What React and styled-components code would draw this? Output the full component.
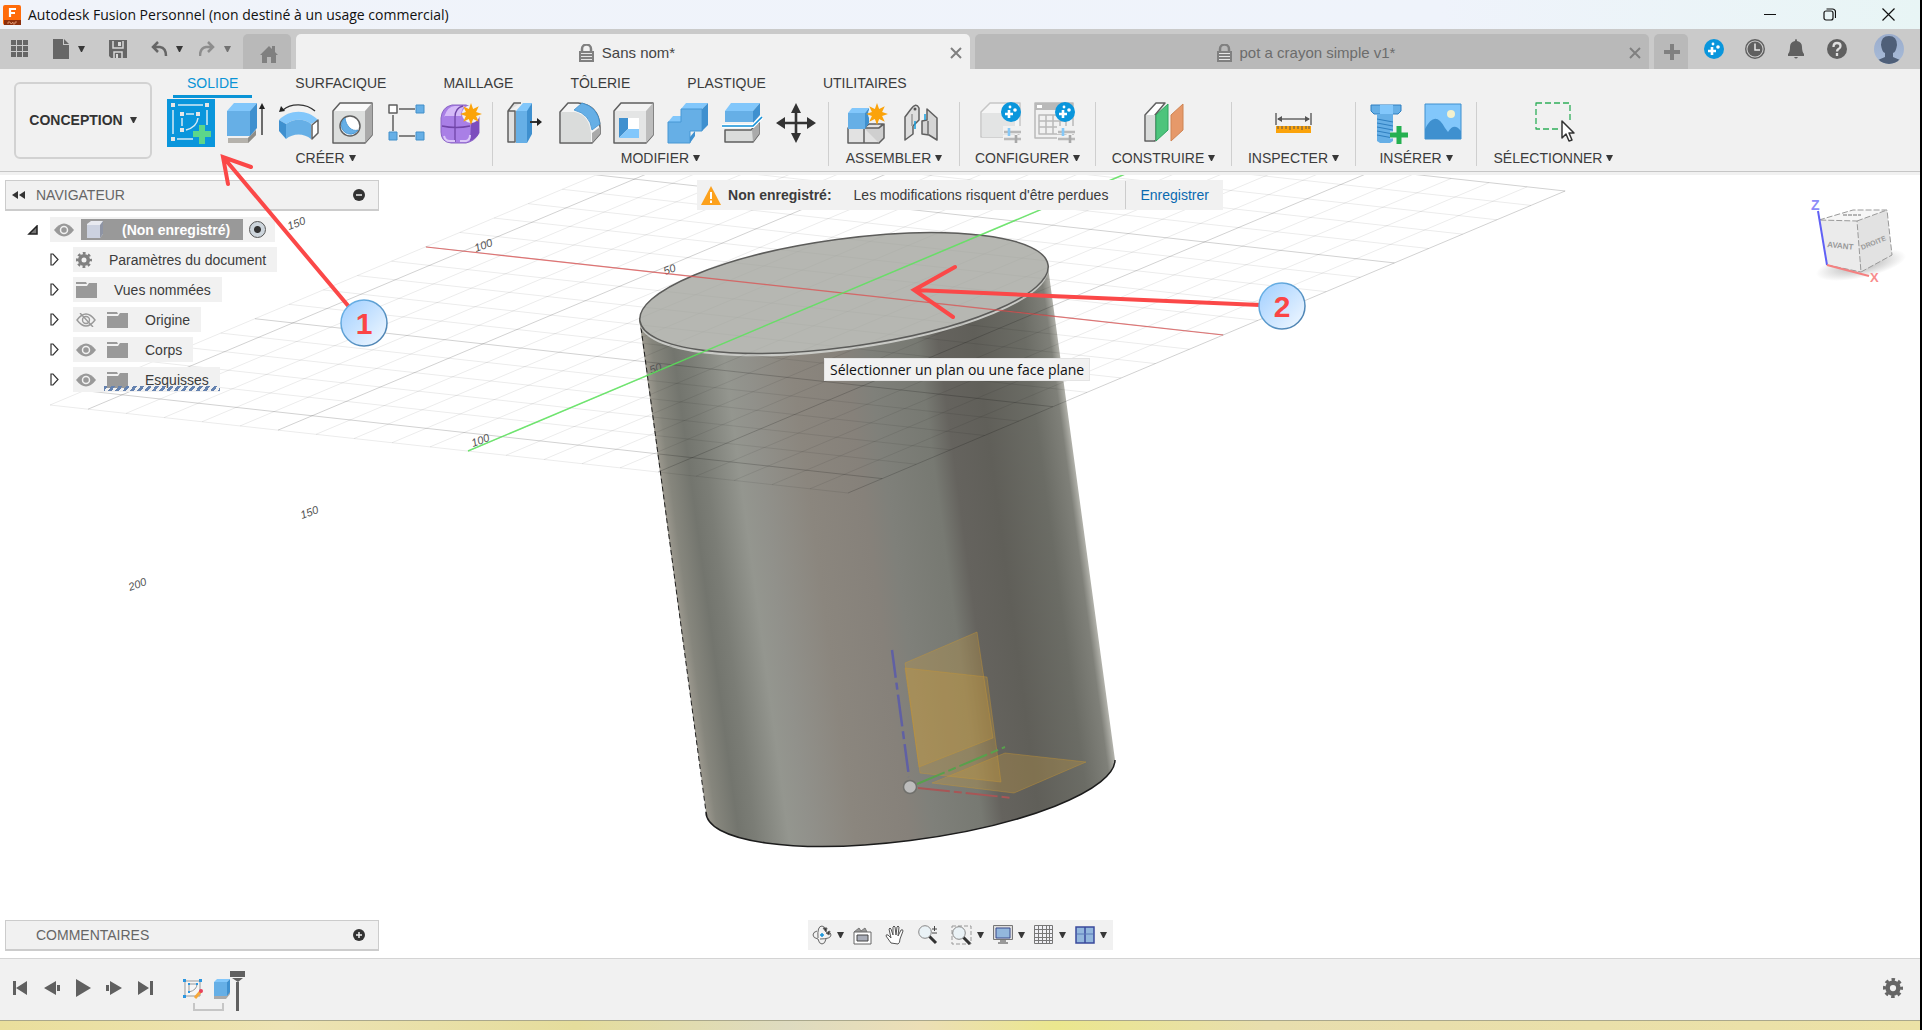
import React from 'react'
import styled, { createGlobalStyle, css } from 'styled-components'

const GlobalStyle = createGlobalStyle`
* { box-sizing: border-box; }
body {
  margin: 0;
  overflow: hidden;
  font-family: "Liberation Sans", Arial, sans-serif;
  font-size: 14px;
  color: #3c3c3c;
}
button {
  font: inherit;
  color: inherit;
  border: 0;
  padding: 0;
  background: none;
  cursor: pointer;
}
svg { display: block; flex: none; }
`;

const Window = styled.div`
position: relative;
display: flex;
flex-direction: column;
height: 100vh;
border-right: 2px solid #000;
background: #fff;
`;

const TitleBar = styled.header`
display: flex;
align-items: center;
flex: none;
height: 29px;
padding: 0 25px 0 3px;
gap: 7px;
background: linear-gradient(90deg, #f0f3fa 0%, #eff3fb 75%, #e8f5f5 100%);
font-family: "Open Sans", "Noto Sans", sans-serif;
font-size: 14px;
line-height: 20px;
color: #111;
`;

const WindowButtons = styled.div`
display: flex;
gap: 46px;
margin-left: auto;
`;

const TabBar = styled.div`
display: flex;
align-items: flex-end;
flex: none;
height: 40px;
background: #cacaca;
color: #666;
`;

const QuickTools = styled.div`
display: flex;
align-items: center;
align-self: stretch;
gap: 24px;
padding: 0 12px 0 11px;
`;

const UndoGroup = styled.div`
display: flex;
gap: 16px;
`;

const IconButton = styled.button`
display: flex;
align-items: center;
gap: 8px;
opacity: ${p => (p.$dim ? 0.6 : 1)};
`;

const tabShape = css`
height: 35px;
border-radius: 5px 5px 0 0;
background: #b9b9b9;
`;

const HomeTab = styled.button`
${tabShape}
width: 48px;
display: flex;
justify-content: center;
align-items: center;
padding: 4px 0 0 4px;
color: #808080;
`;

const DocTab = styled.div`
${tabShape}
flex: 1;
display: flex;
align-items: center;
margin-left: 5px;
padding: 2px 8px 0;
color: ${p => (p.$active ? '#444' : '#6c6c6c')};
background: ${p => (p.$active ? '#f1f1f1' : '#b9b9b9')};
`;

const DocName = styled.button`
flex: 1;
display: flex;
align-items: center;
justify-content: center;
gap: 8px;
font-size: 15px;
line-height: 20px;
`;

const NewTab = styled(HomeTab)`
width: 34px;
margin-left: 5px;
padding: 0 0 0 2px;
`;

const AccountTools = styled.div`
display: flex;
align-items: center;
align-self: stretch;
gap: 21px;
padding: 0 16px;

.avatar { margin-left: 6px; }
`;

const Ribbon = styled.div`
display: flex;
flex: none;
height: 106px;
padding: 0 14px;
gap: 12px;
background: linear-gradient(#f1f1f1 102px, #c6c6c6 102px, #c6c6c6 103px, #f1f1f1 103px);
`;

const Workspace = styled.button`
display: flex;
align-items: center;
justify-content: center;
gap: 7px;
width: 138px;
height: 77px;
margin-top: 13px;
padding-bottom: 2px;
border: 2px solid #d2d2d2;
border-radius: 6px;
font-weight: 700;
font-size: 14px;
color: #333;
`;

const RibbonBody = styled.div`
display: flex;
flex-direction: column;
`;

const RibbonTabs = styled.div`
display: flex;
gap: 29px;
height: 29px;
padding-left: 9px;
`;

const RibbonTab = styled.button`
padding: 2px 14px 0;
line-height: 24px;
color: ${p => (p.$active ? '#0a94d6' : '#3c3c3c')};
border-bottom: 3px solid ${p => (p.$active ? '#0a94d6' : 'transparent')};
`;

const Groups = styled.div`
display: flex;
`;

const Group = styled.div`
display: flex;
flex-direction: column;
align-items: center;
width: ${p => p.$width}px;
height: 69px;

&:first-child { padding-right: 5px; }
`;

const Divider = styled.div`
width: 1px;
height: 64px;
margin-top: 4px;
background: #cfcfcf;
`;

const Tools = styled.div`
display: flex;
height: 50px;
`;

const Tool = styled.button`
display: flex;
align-items: center;
justify-content: center;
width: 54px;
height: 50px;
`;

const GroupLabel = styled.button`
display: flex;
align-items: center;
gap: 4px;
line-height: 20px;
white-space: nowrap;
`;

const Viewport = styled.main`
position: relative;
flex: 1;
min-height: 0;
overflow: hidden;
`;

const Scene = styled.svg`
position: absolute;
inset: 0;
width: 100%;
height: 100%;
`;

const Overlay = styled.div`
position: relative;
display: flex;
flex-direction: column;
justify-content: space-between;
height: 100%;
padding: 5px 5px 7px;
`;

const OverlayRow = styled.div`
display: grid;
grid-template-columns: 1fr auto 1fr;
align-items: start;
`;

const Panel = styled.section`
width: 374px;
`;

const PanelHeader = styled.div`
display: flex;
align-items: center;
gap: 11px;
height: 31px;
padding: 0 13px 0 6px;
border: 1px solid #ccc;
border-bottom-width: 2px;
background: #f1f1f1;
color: #666;

.title { flex: 1; padding-left: ${p => (p.$plain ? 24 : 0)}px; }
`;

const Tree = styled.div`
display: flex;
flex-direction: column;
align-items: flex-start;
gap: 5px;
padding-top: 6px;
`;

const TreeRow = styled.div`
display: flex;
align-items: center;
gap: 12px;
height: 25px;
padding-left: ${p => (p.$root ? 21 : 39)}px;
`;

const TreeItem = styled.div`
display: flex;
align-items: center;
position: relative;
gap: 11px;
height: 25px;
padding: ${p => (p.$root ? '0 9px 0 4px' : '0 11px 0 3px')};
background: #f1f1f1;
color: #3c3c3c;
white-space: nowrap;

.name { padding-left: 6px; }
`;

const RootName = styled.button`
display: flex;
align-items: center;
gap: 18px;
height: 21px;
padding: 0 13px 0 5px;
margin: 0 -5px 0 -4px;
background: #999;
color: #fff;
font-weight: 700;
`;

const Activate = styled.input`
appearance: none;
width: 17px;
height: 17px;
margin: 0;
border: 1px solid #555;
border-radius: 50%;
background: radial-gradient(circle, #333 0 3px, #cdd5dc 4px 100%);
`;

const Stripes = styled.div`
position: absolute;
left: 31px;
right: 0;
bottom: 1px;
height: 5px;
background: repeating-linear-gradient(125deg, #6482b0 0 3px, transparent 3px 6px);
`;

const Alert = styled.div`
display: flex;
align-items: center;
height: 30px;
padding: 0 14px 0 4px;
background: #f1f1f1;

strong { padding: 0 22px 0 7px; }
span { padding-right: 17px; }
a {
  padding-left: 14px;
  line-height: 28px;
  border-left: 1px solid #ccc;
  color: #0a6ab0;
  text-decoration: none;
}
`;

const CubeSlot = styled.div`
justify-self: end;
`;

const ViewBar = styled.div`
display: flex;
align-items: center;
gap: 9px;
height: 30px;
padding: 0 6px 0 4px;
background: #f1f1f1;
`;

const ViewButton = styled(IconButton)`
gap: 5px;
padding-right: ${p => (p.$plain ? 4 : 0)}px;
`;

const Hint = styled.div`
position: absolute;
left: 824px;
top: 183px;
padding: 0 5px;
border: 1px solid #e4e4e4;
background: #f1f1f1;
font-family: "Open Sans", "Noto Sans", sans-serif;
font-size: 14px;
line-height: 21px;
color: #111;
white-space: nowrap;
`;

const Timeline = styled.footer`
display: flex;
align-items: center;
flex: none;
height: 62px;
padding: 0 17px 4px 12px;
border-top: 1px solid #d4d4d4;
background: #f1f1f1;
color: #606060;
`;

const Playback = styled.div`
display: flex;
gap: 14px;
margin-right: 29px;
`;

const Settings = styled.button`
margin-left: auto;
`;

const Desktop = styled.div`
flex: none;
height: 10px;
border-top: 1px solid #aaa88c;
background: linear-gradient(90deg, #eadf9c 0%, #ede3b4 15%, #e5dd9c 30%, #dedbc0 41%, #ecdfb6 48%, #ebe78e 55%, #e8deae 66%, #ece2a6 100%);
`;

const Annotations = styled.svg`
position: absolute;
left: 0;
top: 0;
pointer-events: none;
`;

const Caret = () => (
    <svg width="7" height="6" viewBox="0 0 7 6"><path d="M0 0h7L4 6H3z" fill="#383838" /></svg>
)

/* ---- shared icon pieces ---- */
const LIGHT = '#82c7fb';
const MID = '#66afe6';
const DARK = '#3f90cf';
const LINE = '#5f5f5f';

const Art = ({ w = 42, h = 42, children }) => (
    <svg width={w} height={h} viewBox={`0 0 ${w} ${h}`} fill="none" strokeLinejoin="round">{children}</svg>
)

const Burst = ({ x, y, r }) => {
    const pts = [];
    for (let i = 0; i < 16; i++) {
        const a = (Math.PI / 8) * i;
        const d = i % 2 ? r * 0.5 : r;
        pts.push(`${x + Math.sin(a) * d},${y - Math.cos(a) * d}`);
    }
    return <polygon points={pts.join(' ')} fill="#fba30a" />
}

const Spark = ({ x = 0, y = 0 }) => (
    <g transform={`translate(${x} ${y})`}>
        <circle cx="10" cy="10" r="10" fill="#0a96dc" />
        <path d="M8 8v8M4 12h8" stroke="#fff" strokeWidth="2.600" />
        <circle cx="14" cy="8" r="1.800" fill="#fff" />
        <circle cx="9" cy="5" r="1.400" fill="#fff" />
    </g>
)

const SketchIcon = () => (
    <Art w={48} h={48}>
        <rect width="48" height="48" fill="#0a96dc" />
        <path d="M11 6h25M6 11v24M40 11v15M10 40h16M19 15h8M15 19v8M31 19q-1 9-12 12" stroke="#d6eaf5" strokeWidth="1.500" />
        {[[6, 6], [40, 6], [6, 40], [15, 15], [31, 15], [15, 31]].map(([x, y]) => (
            <rect key={`${x}-${y}`} x={x - 2} y={y - 2} width="4" height="4" fill="#e6e6e6" />
        ))}
        <path d="M35 26v19M26 35h18" stroke="#5cd68a" strokeWidth="6" />
    </Art>
)

const ExtrudeIcon = () => (
    <Art>
        <path d="M4 36l4 0h16l8-8v5l-8 8H4z" fill="#b5b2ac" />
        <path d="M24 36l8-8v5l-8 8z" fill="#8f8d88" />
        <path d="M3 9l7-8h23l-7 8z" fill={LIGHT} />
        <path d="M3 9h23v25H3z" fill={MID} />
        <path d="M26 9l7-8v25l-7 8z" fill={DARK} />
        <path d="M38 33V5" stroke="#333" strokeWidth="1.400" />
        <path d="M38 1l3 6h-6z" fill="#222" />
    </Art>
)

const RevolveIcon = () => (
    <Art>
        <path d="M5 8C13 1 28 1 37 9" stroke="#333" strokeWidth="1.400" />
        <path d="M1 10l2-6 4 5z" fill="#222" />
        <path d="M1 18C11 7 30 7 40 18l-7 4C26 16 15 17 8 22z" fill={LIGHT} />
        <path d="M1 18l7 4v15l-7-8z" fill={DARK} />
        <path d="M8 22c7-5 18-6 25 0v15c-7-6-18-6-25 0z" fill={MID} />
        <path d="M34 23l6-5v13l-6 6z" fill="#fff" stroke={LINE} strokeWidth="1.500" />
    </Art>
)

const HoleIcon = () => (
    <Art>
        <path d="M1 9l7-8h32v32l-7 8H1z" fill="#fafafa" stroke={LINE} strokeWidth="1.500" />
        <path d="M33 9l7-8v32l-7 8z" fill="#a9a9a9" />
        <path d="M2 9h31v31H2z" fill="#dcdedd" />
        <circle cx="18" cy="24" r="10" fill="#fff" stroke={LINE} strokeWidth="1.500" />
        <path d="M13 16a9 9 0 1 0 13 12C20 30 14 24 13 16z" fill={MID} stroke={DARK} strokeWidth=".8" />
    </Art>
)

const PatternIcon = () => (
    <Art>
        <path d="M13 7h16M7 13v16M13 34h16" stroke={LINE} strokeWidth="1.500" />
        <rect x="3" y="3" width="8" height="8" fill="#fff" stroke={LINE} strokeWidth="1.500" />
        <path d="M30 3h8v8h-8zM3 30h8v8H3zM30 30h8v8h-8z" fill={MID} stroke="#438fc9" />
    </Art>
)

const FormIcon = () => (
    <Art>
        <path d="M1 16Q2 5 12 3h14q12 3 13 12v16q-4 8-13 10H11Q1 40 1 30z" fill="#a97fe6" stroke="#8a65c4" />
        <path d="M4 15Q8 3 16 4h9q-4 3-4 10H5z" fill="#d5baf8" />
        <path d="M31 21q6-1 8-4v14q-3 6-9 8z" fill="#7c4dbd" />
        <path d="M2 24q14 3 28 0M15 15v25M15 15q0-9 8-11" stroke="#7045a8" strokeWidth="1.300" />
        <path d="M4 34q1 5 6 5h5M20 39h6q4-1 4-6" stroke="#dcc8f8" strokeWidth="2" />
        <circle cx="31" cy="12" r="9" fill="#f1f1f1" />
        <Burst x={31} y={12} r={11} />
    </Art>
)

const PressIcon = () => (
    <Art>
        <path d="M3 9l6-8h7M3 9v31h7V9z" fill="#e0e0e0" stroke={LINE} strokeWidth="1.500" />
        <path d="M11 9l7-8h9l-4 8z" fill={LIGHT} />
        <path d="M11 9h11v32H11z" fill={MID} />
        <path d="M22 9l5-8v31l-5 9z" fill={DARK} />
        <path d="M25 20h9" stroke="#333" strokeWidth="2" />
        <path d="M37 20l-5-4v8z" fill="#222" />
    </Art>
)

const FilletIcon = () => (
    <Art>
        <path d="M1 10l8-9h10q21 2 22 24v7l-8 9H1z" fill="#f5f5f5" stroke={LINE} strokeWidth="1.500" />
        <path d="M2 10h14q14 3 16 21v9H2z" fill="#dadcdb" />
        <path d="M33 31l8-6v7l-8 9z" fill="#aaa" />
        <path d="M15 8l8-7q16 4 18 21l-8 6Q31 12 15 8z" fill={MID} stroke={DARK} strokeWidth=".8" />
    </Art>
)

const ShellIcon = () => (
    <Art>
        <path d="M1 9l7-8h32v32l-7 8H1z" fill="#f3f3f3" stroke={LINE} strokeWidth="1.500" />
        <path d="M33 9l7-8v32l-7 8z" fill="#bdbdbd" />
        <path d="M2 9h31v31H2z" fill="#e4e5e5" />
        <path d="M6 16h20v20H6z" fill="#fff" />
        <path d="M6 16h9v11l-9 9z" fill={DARK} />
        <path d="M15 27h11v9H6z" fill={LIGHT} />
    </Art>
)

const CombineIcon = () => (
    <Art>
        <path d="M14 7l5-6h22l-6 6z" fill={LIGHT} />
        <path d="M1 20l5-6h8v6z" fill={LIGHT} />
        <path d="M14 7h21v22H23v12H1V20h13z" fill={MID} stroke="#4797d4" />
        <path d="M35 7l6-6v22l-6 6zM23 35l5-6v5l-5 7z" fill={DARK} />
    </Art>
)

const SplitIcon = () => (
    <Art>
        <path d="M4 28h26l8-8v12l-6 8H4z" fill="#dadcdb" stroke={LINE} strokeWidth="1.500" />
        <path d="M31 28l7-7v11l-6 8z" fill="#aaa" />
        <path d="M4 9l6-8h29l-7 8z" fill={LIGHT} />
        <path d="M4 9h28v11H4z" fill={MID} />
        <path d="M32 9l7-8v12l-7 8z" fill={DARK} />
        <path d="M1 24h31l9-9" stroke="#fff" strokeWidth="4" />
        <path d="M1 24h31l9-9" stroke="#1591d8" strokeWidth="1.600" />
    </Art>
)

const MoveIcon = () => (
    <Art>
        <path d="M21 7v28M7 21h28" stroke="#333" strokeWidth="2.600" />
        <path d="M21 1l5 10H16zM21 41l5-10H16zM1 21l9-6v12zM41 21l-9-6v12z" fill="#333" />
    </Art>
)

const ComponentIcon = () => (
    <Art>
        <path d="M2 26h16l5-4h14l-4 4v15H2z" fill="#e2e2e2" stroke={LINE} strokeWidth="1.500" />
        <path d="M18 26v15M18 26h15l5-4v14l-5 5" fill="#cfcfcf" stroke={LINE} strokeWidth="1.500" />
        <path d="M2 11l4-5h17l-4 5z" fill={LIGHT} />
        <path d="M2 11h17v16H2z" fill={MID} />
        <path d="M19 11l4-5v15l-4 6z" fill={DARK} />
        <circle cx="31" cy="12" r="9" fill="#f1f1f1" />
        <Burst x={31} y={12} r={11} />
    </Art>
)

const JointIcon = () => (
    <Art>
        <path d="M5 15l6-8q5-7 8-1v12l-6 6v8l-8 6z" fill="#dedede" stroke={LINE} strokeWidth="1.500" />
        <path d="M12 12v12" stroke="#aaa" strokeWidth="2" />
        <path d="M37 16L27 7v11l-5 1v13l7 1 8 5z" fill="#d5d5d5" stroke={LINE} strokeWidth="1.500" />
        <path d="M28 19v13" stroke="#888" strokeWidth="2" />
        <path d="M15 19v8M25 12v6" stroke="#16a0e0" strokeWidth="1.500" />
        <circle cx="15" cy="7" r="1.500" fill="#555" />
    </Art>
)

const Sliders = () => (
    <g>
        <path d="M23 28h18M23 37h18" stroke="#f1f1f1" strokeWidth="8" />
        <path d="M24 30h17M24 37h17" stroke="#b9b9b9" strokeWidth="2.400" />
        <path d="M29 26v8" stroke="#84c8f8" strokeWidth="2.600" />
        <path d="M36 33v8" stroke="#a8a8a8" strokeWidth="2.600" />
    </g>
)

const ConfigIcon = () => (
    <Art>
        <path d="M1 10l9-9h30v30l-4 4H1z" fill="#f5f5f5" stroke="#c6c6c6" strokeWidth="1.500" />
        <path d="M2 11h33v24H2z" fill="#e3e4e4" />
        <Sliders />
        <Spark x={21} />
    </Art>
)

const TableIcon = () => (
    <Art>
        <path d="M1 1h38v35H1z" fill="#f1f1f1" stroke="#b9b9b9" strokeWidth="1.500" />
        <path d="M1 1h38v7H1z" fill="#b9b9b9" />
        <path d="M3 3h5v3H3z" fill="#fff" />
        <path d="M5 13h27v19H5zM5 19h27M5 25h27M12 13v19M19 13v19M26 13v19" stroke="#b9b9b9" strokeWidth="1.500" />
        <Sliders />
        <Spark x={21} />
    </Art>
)

const PlaneIcon = () => (
    <Art>
        <path d="M2 13L13 1h9L12 13v26H2z" fill="#fff" stroke={LINE} strokeWidth="1.500" />
        <path d="M3 13h9v25H3z" fill="#d9dbda" />
        <path d="M13 13L25 2v26L13 39z" fill="#4dc47c" stroke="#2fa45e" />
        <path d="M28 13L40 2v26L28 39z" fill="#e6996a" stroke="#cf8453" />
    </Art>
)

const MeasureIcon = () => (
    <Art>
        <path d="M3 11v12M38 11v12M5 17h31" stroke="#666" strokeWidth="1.500" />
        <path d="M4 17l5-3v6zM37 17l-5-3v6z" fill="#555" />
        <rect x="3" y="24" width="35" height="7" fill="#fba30a" />
        <path d="M5 24v3M9 24v3M13 24v3M17 24v4M21 24v3M25 24v3M29 24v4M33 24v3M36 24v3" stroke="#555" strokeWidth="1" />
    </Art>
)

const BoltIcon = () => (
    <Art>
        <path d="M3 3h30v6l-3 3H6l-3-3z" fill={MID} stroke="#2e7fc0" />
        <path d="M12 3h13v9H12z" fill={LIGHT} />
        <path d="M9 12h16v27l-3 2H12l-3-2z" fill={MID} />
        <path d="M9 17l16 3M9 21l16 3M9 25l16 3M9 29l16 3M9 33l16 3" stroke="#2e7fc0" />
        <path d="M31 24v18M22 33h18" stroke="#f1f1f1" strokeWidth="7" />
        <path d="M31 24v18M22 33h18" stroke="#25b050" strokeWidth="5" />
    </Art>
)

const PictureIcon = () => (
    <Art>
        <rect x="3" y="2" width="36" height="35" fill={LIGHT} />
        <path d="M3 27q10-20 20-1l3 4q6-10 13-1v8H3z" fill={DARK} />
        <rect x="3" y="2" width="36" height="35" stroke={DARK} />
        <circle cx="29" cy="12" r="4" fill="#f3f1ce" />
    </Art>
)

const SelectIcon = () => (
    <Art>
        <rect x="3" y="1" width="34" height="26" stroke="#2faf5a" strokeWidth="1.300" strokeDasharray="6 3" />
        <path d="M28 18h12v12H28z" fill="#f1f1f1" />
        <path d="M29 19v17l4-4 3 7 3-1-3-7h5z" fill="#fff" stroke="#333" strokeWidth="1.500" />
    </Art>
)

const Lock = () => (
    <svg width="15" height="18" viewBox="0 0 15 18">
        <path d="M3 8V5a4 4 0 0 1 9 0v3" fill="none" stroke="#808080" strokeWidth="2.500" />
        <path d="M0 7h15v11H0z" fill="#808080" />
        <path d="M2 9.500h11M2 12.500h11M2 15.500h11" stroke="#e6e6e6" />
    </svg>
)

const Cross = () => (
    <svg width="12" height="12" viewBox="0 0 12 12"><path d="M1 1l10 10M11 1L1 11" stroke="#808080" strokeWidth="2" /></svg>
)

const Eye = ({ off }) => (
    <svg width="20" height="14" viewBox="0 0 20 14" fill="none">
        {off ? (
            <g stroke="#999" strokeWidth="1.400">
                <path d="M1 7q9-12 18 0q-9 12-18 0z" />
                <circle cx="10" cy="7" r="3.500" />
                <path d="M4 0l13 14" />
            </g>
        ) : (
            <g>
                <path d="M0 7q10-13 20 0q-10 13-20 0z" fill="#999" />
                <circle cx="10" cy="7" r="3.500" stroke="#f1f1f1" strokeWidth="1.500" />
            </g>
        )}
    </svg>
)

const Folder = () => (
    <svg width="21" height="16" viewBox="0 0 21 16">
        <path d="M0 0h10l1 2H0zM0 4h11l2-3h8v15H0z" fill="#999" />
    </svg>
)

const Gear = ({ size = 16, color = '#666' }) => (
    <svg width={size} height={size} viewBox="0 0 16 16" fill="none">
        <circle cx="8" cy="8" r="4.300" stroke={color} strokeWidth="3.600" />
        <circle cx="8" cy="8" r="6.800" stroke={color} strokeWidth="2.400" strokeDasharray="2.800 2.541" strokeDashoffset="1.400" />
    </svg>
)

const Twisty = () => (
    <svg width="17" height="13" viewBox="0 0 17 13"><path d="M7 1v11h2l5-5.500L9 1z" fill="#fff" stroke="#333" strokeWidth="1.200" /></svg>
)

const Toggle = ({ plus }) => (
    <svg width="12" height="12" viewBox="0 0 12 12">
        <circle cx="6" cy="6" r="6" fill="#333" />
        <path d={plus ? 'M3 6h6M6 3v6' : 'M3 6h6'} stroke="#f1f1f1" strokeWidth="1.500" />
    </svg>
)

/* ---- ribbon content ---- */
const ribbonTabs = ['SOLIDE', 'SURFACIQUE', 'MAILLAGE', 'TÔLERIE', 'PLASTIQUE', 'UTILITAIRES'];

const groups = [
    { label: 'CRÉER', width: 328, tools: [SketchIcon, ExtrudeIcon, RevolveIcon, HoleIcon, PatternIcon, FormIcon] },
    { label: 'MODIFIER', width: 335, tools: [PressIcon, FilletIcon, ShellIcon, CombineIcon, SplitIcon, MoveIcon] },
    { label: 'ASSEMBLER', width: 130, tools: [ComponentIcon, JointIcon] },
    { label: 'CONFIGURER', width: 135, tools: [ConfigIcon, TableIcon] },
    { label: 'CONSTRUIRE', width: 135, tools: [PlaneIcon] },
    { label: 'INSPECTER', width: 123, tools: [MeasureIcon] },
    { label: 'INSÉRER', width: 120, tools: [BoltIcon, PictureIcon] },
    { label: 'SÉLECTIONNER', width: 153, tools: [SelectIcon] },
];

/* ---- ground grid, 21 x 21 cells in parallel projection ---- */
const CELLS = 21;
const at = (i, j) => [50 + i * 38 + j * 34.15, 405 + i * 4.19 - j * 14.38];
const gridLines = [];
for (let k = 0; k <= CELLS; k++) {
    const major = (k - 11) % 5 === 0;
    gridLines.push({ a: at(k, 0), b: at(k, CELLS), major });
    gridLines.push({ a: at(0, k), b: at(CELLS, k), major });
}

const Grid = () => (
    <g>
        {gridLines.map(({ a, b, major }, i) => (
            <line key={i} x1={a[0]} y1={a[1]} x2={b[0]} y2={b[1]} stroke="#000" strokeOpacity={major ? 0.18 : 0.08} />
        ))}
    </g>
)

const marks = [
    ['150', 289, 230], ['100', 476, 252], ['50', 665, 275], ['50', 651, 374],
    ['100', 473, 447], ['150', 302, 519], ['200', 130, 591],
];

const body = 'M639 318L706 812A206 54 -7.800 0 0 1115 760L1048 267z';

const Model = () => (
    <Scene>
        <defs>
            <linearGradient id="steel" gradientUnits="userSpaceOnUse" x1="640" y1="318" x2="1048" y2="263">
                <stop offset="0" stopColor="#9a978d" />
                <stop offset=".02" stopColor="#86867d" />
                <stop offset=".07" stopColor="#73756e" />
                <stop offset=".11" stopColor="#7b7d76" />
                <stop offset=".19" stopColor="#94968f" />
                <stop offset=".24" stopColor="#91918b" />
                <stop offset=".35" stopColor="#8b867e" />
                <stop offset=".48" stopColor="#86817a" />
                <stop offset=".54" stopColor="#7f807a" />
                <stop offset=".66" stopColor="#777972" />
                <stop offset=".71" stopColor="#65635e" />
                <stop offset=".8" stopColor="#605f59" />
                <stop offset=".92" stopColor="#6b6c65" />
                <stop offset=".98" stopColor="#7f8079" />
                <stop offset="1" stopColor="#b4b4ad" />
            </linearGradient>
        </defs>
        <g transform="translate(0 -175)" fill="none">
            <path d={body} fill="url(#steel)" />
            <path d="M706 812A206 54 -7.800 0 0 1115 760" stroke="#1c1c1c" strokeWidth="1.500" />
            <path d="M640 320L706 812" stroke="#222" strokeDasharray="5 3" />
            <ellipse cx="844" cy="296" rx="206" ry="54" transform="rotate(-7.800 844 296)" fill="#c9cac6" />
            <ellipse cx="844" cy="293" rx="206" ry="54" transform="rotate(-7.800 844 293)" fill="#b6b7b2" />
            <Grid />
            {marks.map(([t, x, y], i) => (
                <text key={i} x={x} y={y} transform={`rotate(-20 ${x} ${y})`} fontSize="11" fontStyle="italic" fill="#555">{t}</text>
            ))}
            <ellipse cx="844" cy="293" rx="206" ry="54" transform="rotate(-7.800 844 293)" fill="#b6b7b2" fillOpacity=".72" stroke="#5c5c5a" strokeWidth="1.500" />
            <path d="M426 247L1223 335" stroke="#e05050" strokeOpacity=".75" strokeWidth="1.200" />
            <path d="M468 451L1125 174" stroke="#5ce65c" strokeOpacity=".85" strokeWidth="1.500" />

            <g fill="#c99a3c" fillOpacity=".3" stroke="#c99632" strokeOpacity=".4">
                <path d="M905 663L977 632L993 738L919 767z" />
                <path d="M905 668L987 677L1001 782L920 773z" />
                <path d="M932 783L1005 753L1086 762L1014 793z" />
            </g>
            <path d="M892 650L909 777" stroke="#6060a4" strokeWidth="2.500" strokeDasharray="28 5 7 5 32 5 8 5" />
            <path d="M917 784L1005 747" stroke="#58a04c" strokeWidth="2" strokeDasharray="30 4 8 4" />
            <path d="M918 788L1013 798" stroke="#a85656" strokeWidth="2" strokeDasharray="32 4 8 4" />
            <circle cx="910" cy="787" r="6.500" fill="#bcbcbc" stroke="#70706c" strokeWidth="1.500" />
        </g>
    </Scene>
)

const ViewCube = () => (
    <svg width="106" height="110" viewBox="1809 181 106 110" fontFamily="Liberation Sans">
        <defs>
            <radialGradient id="shade">
                <stop offset="0" stopColor="#777" stopOpacity=".6" />
                <stop offset="1" stopColor="#777" stopOpacity="0" />
            </radialGradient>
        </defs>
        <ellipse cx="1861" cy="266" rx="46" ry="13" transform="rotate(-12 1861 266)" fill="url(#shade)" />
        <path d="M1819 221L1853 211L1887 211L1857 222z" fill="#f6f6f6" />
        <path d="M1819 221L1857 222L1861 273L1827 266z" fill="#ebebeb" />
        <path d="M1857 222L1887 211L1892 256L1861 273z" fill="#e2e2e2" />
        <path d="M1819 221L1853 211L1887 211L1892 256L1861 273L1857 222zM1857 222L1887 211M1827 266L1861 273" fill="none" stroke="#999" strokeDasharray="6 2" />
        <path d="M1818 212L1827 266" stroke="#6060f5" strokeWidth="2" />
        <path d="M1827 266L1869 277" stroke="#f58080" strokeWidth="2" />
        <text x="1811" y="211" fontSize="14" fontWeight="700" fill="#8c8cf8">Z</text>
        <text x="1870" y="283" fontSize="13" fontWeight="700" fill="#f88c8c">X</text>
        <text x="1827" y="248" fontSize="8" fontWeight="700" fill="#999" transform="rotate(6 1827 248)">AVANT</text>
        <text x="1862" y="251" fontSize="7" fontWeight="700" fill="#999" transform="rotate(-22 1862 251)">DROITE</text>
        <path d="M1843 216h18" stroke="#b4b4b4" strokeWidth="2" strokeDasharray="4 1" />
    </svg>
)

const Badge = ({ x, y, n }) => (
    <g>
        <circle cx={x} cy={y} r="23" fill="url(#badge)" stroke="url(#rim)" strokeWidth="1.500" />
        <text x={x} y={y + 11} textAnchor="middle" fontSize="30" fontWeight="700" fill="#fb4545">{n}</text>
    </g>
)

const App = () => (
    <Window>
        <GlobalStyle />
        <TitleBar>
            <svg width="18" height="20" viewBox="0 0 18 20">
                <rect width="18" height="20" rx="2" fill="#ff6b0a" />
                <path d="M1 15h17v5H1z" fill="#8c2f0c" />
                <path d="M7 4h6M7 3v9M7 8h5" stroke="#fff" strokeWidth="2.200" />
                <path d="M5 19v-2h2l1 2 2-2v2h2v-2h2" fill="none" stroke="#e8a07a" strokeWidth=".8" />
            </svg>
            <span>Autodesk Fusion Personnel (non destiné à un usage commercial)</span>
            <WindowButtons>
                <IconButton aria-label="Réduire"><svg width="13" height="13"><path d="M0 6.500h12" stroke="#111" /></svg></IconButton>
                <IconButton aria-label="Restaurer">
                    <svg width="13" height="13" fill="none" stroke="#111" strokeWidth="1.200">
                        <rect x="1" y="3" width="9" height="9" rx="2" />
                        <path d="M3.500 1h6a3 3 0 0 1 3 3v6" />
                    </svg>
                </IconButton>
                <IconButton aria-label="Fermer"><svg width="13" height="13"><path d="M.5.5l12 12M12.500.5l-12 12" stroke="#111" strokeWidth="1.200" /></svg></IconButton>
            </WindowButtons>
        </TitleBar>

        <TabBar>
            <QuickTools>
                <IconButton aria-label="Données">
                    <svg width="18" height="18" fill="#666">
                        {[0, 6, 12].map(x => [0, 6, 12].map(y => <rect key={`${x}${y}`} x={x} y={y} width="5" height="5" />))}
                    </svg>
                </IconButton>
                <IconButton aria-label="Fichier">
                    <svg width="17" height="20" fill="#666"><path d="M0 0h10v6h6v14H0zM11 0l5 5h-5z" /></svg>
                    <Caret />
                </IconButton>
                <IconButton aria-label="Enregistrer">
                    <svg width="18" height="18"><path d="M0 0h18v18H2l-2-2z" fill="#666" /><path d="M4 1v7h10V1M5 18v-6h8v6" fill="none" stroke="#d8d8d8" strokeWidth="1.500" /><path d="M9 2h3v4H9zM7 14h2v4H7z" fill="#d8d8d8" /></svg>
                </IconButton>
                <UndoGroup>
                    <IconButton aria-label="Annuler">
                        <svg width="17" height="16" fill="none" stroke="#666" strokeWidth="2.500"><path d="M7 1L2 6l5 5M2 6h7q6 1 6 9" /></svg>
                        <Caret />
                    </IconButton>
                    <IconButton $dim aria-label="Rétablir">
                        <svg width="17" height="16" fill="none" stroke="#666" strokeWidth="2.500"><path d="M9 1l5 5-5 5M14 6H7q-6 1-6 9" /></svg>
                        <Caret />
                    </IconButton>
                </UndoGroup>
            </QuickTools>
            <HomeTab aria-label="Accueil">
                <svg width="18" height="18" viewBox="0 0 18 18"><path d="M0 10l9-9 3 3V1h3v6l3 3h-2v8h-5v-6H7v6H2v-8z" fill="#808080" /></svg>
            </HomeTab>
            <DocTab $active>
                <DocName><Lock />Sans nom*</DocName>
                <IconButton aria-label="Fermer l'onglet"><Cross /></IconButton>
            </DocTab>
            <DocTab>
                <DocName><Lock />pot a crayon simple v1*</DocName>
                <IconButton aria-label="Fermer l'onglet"><Cross /></IconButton>
            </DocTab>
            <NewTab aria-label="Nouvel onglet">
                <svg width="16" height="16"><path d="M8 0v16M0 8h16" stroke="#808080" strokeWidth="4" /></svg>
            </NewTab>
            <AccountTools>
                <IconButton aria-label="Extensions"><svg width="20" height="20"><Spark /></svg></IconButton>
                <IconButton aria-label="Tâches">
                    <svg width="20" height="20" fill="none"><circle cx="10" cy="10" r="9.300" stroke="#606060" strokeWidth="1.400" /><circle cx="10" cy="10" r="7.500" fill="#606060" /><path d="M10 4.500V11h5" stroke="#e8e8e8" strokeWidth="1.500" /></svg>
                </IconButton>
                <IconButton aria-label="Notifications">
                    <svg width="20" height="20" fill="#606060"><path d="M10 0q1 0 1 2 5 1 5 6 0 5 2 7v2H2v-2q2-2 2-7 0-5 5-6 0-2 1-2zM8 18h4q-2 3-4 0z" /></svg>
                </IconButton>
                <IconButton aria-label="Aide">
                    <svg width="20" height="20"><circle cx="10" cy="10" r="10" fill="#606060" /><path d="M6.500 8q0-4 3.500-4t3.500 3q0 2-2 3-1.500 1-1.500 2.500M10 14v3" fill="none" stroke="#e0e0e0" strokeWidth="2.300" /></svg>
                </IconButton>
                <IconButton className="avatar" aria-label="Profil">
                    <svg width="30" height="30" viewBox="0 0 30 30">
                        <defs><linearGradient id="sky" x2="0" y2="1"><stop stopColor="#9aaccc" /><stop offset="1" stopColor="#a8bbd8" /></linearGradient><clipPath id="round"><circle cx="15" cy="15" r="15" /></clipPath></defs>
                        <circle cx="15" cy="15" r="15" fill="url(#sky)" />
                        <path d="M7 11q0-9 8-9t8 9q-1 7-4 8v4l7 3v5H4v-5l7-3v-4q-3-1-4-8z" fill="#4f5f78" clipPath="url(#round)" />
                    </svg>
                </IconButton>
            </AccountTools>
        </TabBar>

        <Ribbon>
            <Workspace>CONCEPTION <Caret /></Workspace>
            <RibbonBody>
                <RibbonTabs>
                    {ribbonTabs.map((t, i) => <RibbonTab key={t} $active={i === 0}>{t}</RibbonTab>)}
                </RibbonTabs>
                <Groups>
                    {groups.map((g, i) => (
                        <React.Fragment key={g.label}>
                            {i > 0 && <Divider />}
                            <Group $width={g.width}>
                                <Tools>
                                    {g.tools.map((Icon, n) => <Tool key={n} aria-label={`${g.label} ${n + 1}`}><Icon /></Tool>)}
                                </Tools>
                                <GroupLabel>{g.label} <Caret /></GroupLabel>
                            </Group>
                        </React.Fragment>
                    ))}
                </Groups>
            </RibbonBody>
        </Ribbon>

        <Viewport>
            <Model />
            <Overlay>
                <OverlayRow>
                    <Panel>
                        <PanelHeader>
                            <svg width="13" height="8"><path d="M6 0v8L0 4zM13 0v8L7 4z" fill="#333" /></svg>
                            <span className="title">NAVIGATEUR</span>
                            <IconButton aria-label="Replier"><Toggle /></IconButton>
                        </PanelHeader>
                        <Tree>
                            <TreeRow $root>
                                <svg width="12" height="10"><path d="M11 1v8H3z" fill="#777" stroke="#222" strokeWidth="1.500" /></svg>
                                <TreeItem $root>
                                    <Eye />
                                    <RootName>
                                        <svg width="18" height="17" viewBox="0 0 18 17"><path d="M1 3l4-3h12v13l-3 4H1z" fill="#e8eaf0" /><path d="M14 4l3-4v13l-3 4z" fill="#8e94a4" /><path d="M1 4h13v13H1z" fill="#ccd2e0" /></svg>
                                        (Non enregistré)
                                    </RootName>
                                    <Activate type="radio" name="component" defaultChecked aria-label="Activer le composant" />
                                </TreeItem>
                            </TreeRow>
                            <TreeRow>
                                <Twisty />
                                <TreeItem><Gear color="#808080" /><span className="name">Paramètres du document</span></TreeItem>
                            </TreeRow>
                            <TreeRow>
                                <Twisty />
                                <TreeItem><Folder /><span className="name">Vues nommées</span></TreeItem>
                            </TreeRow>
                            <TreeRow>
                                <Twisty />
                                <TreeItem><Eye off /><Folder /><span className="name">Origine</span></TreeItem>
                            </TreeRow>
                            <TreeRow>
                                <Twisty />
                                <TreeItem><Eye /><Folder /><span className="name">Corps</span></TreeItem>
                            </TreeRow>
                            <TreeRow>
                                <Twisty />
                                <TreeItem><Eye /><Folder /><span className="name">Esquisses</span><Stripes /></TreeItem>
                            </TreeRow>
                        </Tree>
                    </Panel>
                    <Alert>
                        <svg width="20" height="19" viewBox="0 0 20 19"><path d="M10 0l10 19H0z" fill="#fca11c" /><path d="M10 6v7M10 14.500V17" stroke="#fff" strokeWidth="2" /></svg>
                        <strong>Non enregistré:</strong>
                        <span>Les modifications risquent d'être perdues</span>
                        <a href="#save">Enregistrer</a>
                    </Alert>
                    <CubeSlot><ViewCube /></CubeSlot>
                </OverlayRow>

                <OverlayRow>
                    <Panel>
                        <PanelHeader $plain>
                            <span className="title">COMMENTAIRES</span>
                            <IconButton aria-label="Déplier"><Toggle plus /></IconButton>
                        </PanelHeader>
                    </Panel>
                    <ViewBar>
                        <ViewButton aria-label="Orbite">
                            <svg width="20" height="20" viewBox="0 0 20 20" fill="none" stroke="#666">
                                <path d="M6 13Q5 1 10 1q3 0 4 5M6 14q1 5 4 5t4-5M5 6Q1 7 1 10t5 4M8 14q11 0 11-4 0-2-3-4" />
                                <path d="M11 3l4 0-1 4zM14 8l4-2-1 4z" fill="#333" /><path d="M10 8v4M8 10h4" stroke="#1591d8" strokeWidth="1.500" />
                            </svg>
                            <Caret />
                        </ViewButton>
                        <ViewButton $plain aria-label="Regarder">
                            <svg width="19" height="19" fill="none"><path d="M1 6l5-4 2 3 4-3 2 4" fill="#999" stroke="#777" /><path d="M1 6h17v12H1z" fill="#fff" stroke="#666" /><path d="M4 9h11v6H4z" fill="#a9adb8" stroke="#444" /></svg>
                        </ViewButton>
                        <ViewButton $plain aria-label="Panoramique">
                            <svg width="20" height="20" viewBox="0 0 20 20"><path d="M6 18l-5-7q0-2 2-1l3 3L4 4q1-2 2 0l2 6V2q1-2 2 0l1 8 1-8q1-2 2 0l-1 9 3-6q2-1 2 1l-3 8q0 4-2 5z" fill="#fff" stroke="#555" /></svg>
                        </ViewButton>
                        <ViewButton $plain aria-label="Zoom">
                            <svg width="20" height="20" fill="none"><path d="M11 11l7 7" stroke="#333" strokeWidth="3" /><circle cx="7" cy="7" r="6.300" fill="#eaf2f6" stroke="#888" /><path d="M14 4h5M16.500 1v5M14 8h5" stroke="#444" /></svg>
                        </ViewButton>
                        <ViewButton aria-label="Ajuster">
                            <svg width="21" height="20" fill="none"><path d="M1 1h19v18H1z" stroke="#999" strokeDasharray="4 2" /><path d="M12 12l7 7" stroke="#333" strokeWidth="3" /><circle cx="8" cy="8" r="6.300" fill="#eaf2f6" stroke="#888" /></svg>
                            <Caret />
                        </ViewButton>
                        <ViewButton aria-label="Affichage">
                            <svg width="20" height="20"><path d="M7 14h6v3h2v2H5v-2h2z" fill="#999" /><path d="M.5.500h19v14H.5z" fill="#ddd" stroke="#777" /><path d="M3 3h14v10H3z" fill="#93b7dd" stroke="#3a4a8c" /></svg>
                            <Caret />
                        </ViewButton>
                        <ViewButton aria-label="Grille">
                            <svg width="20" height="20" fill="none"><path d="M1 1h18v18H1z" fill="#f0f0f4" /><path d="M.5.500h18v18H.5zM0 4.500h19M0 8.500h19M0 12.500h19M0 15.500h19M4.500 0v19M8.500 0v19M12.500 0v19M15.500 0v19" stroke="#777" /></svg>
                            <Caret />
                        </ViewButton>
                        <ViewButton aria-label="Fenêtres">
                            <svg width="20" height="18"><path d="M1 1h18v16H1z" fill="#93b7dd" stroke="#3a4a9c" strokeWidth="1.500" /><path d="M10 1v16" stroke="#3a4a9c" strokeWidth="1.500" /><path d="M2 8h16" stroke="#5a7ab8" /></svg>
                            <Caret />
                        </ViewButton>
                    </ViewBar>
                </OverlayRow>
            </Overlay>
            <Hint role="tooltip">Sélectionner un plan ou une face plane</Hint>
        </Viewport>

        <Timeline>
            <Playback>
                <IconButton aria-label="Début"><svg width="17" height="18" fill="#606060"><path d="M1 2h3v14H1zM15 2v14L4 9z" /></svg></IconButton>
                <IconButton aria-label="Précédent"><svg width="17" height="18" fill="#606060"><path d="M13 2v14L1 9zM14 6h3v6h-3z" /></svg></IconButton>
                <IconButton aria-label="Lire"><svg width="17" height="18" fill="#606060"><path d="M2 0l15 9-15 9z" /></svg></IconButton>
                <IconButton aria-label="Suivant"><svg width="17" height="18" fill="#606060"><path d="M5 2l12 7-12 7zM1 6h3v6H1z" /></svg></IconButton>
                <IconButton aria-label="Fin"><svg width="17" height="18" fill="#606060"><path d="M2 2l11 7-11 7zM14 2h3v14h-3z" /></svg></IconButton>
            </Playback>
            <svg width="64" height="48" viewBox="182 963 64 48" fill="none">
                <path d="M185 980h15v15h-15z" fill="#f6f6f6" stroke="#999" />
                <path d="M189 983v7M189 983h8M197 983q0 6-8 8" stroke="#999" />
                <path d="M183 978h3v3h-3zM199 978h3v3h-3zM183 994h3v3h-3zM188 982h2v2h-2zM196 982h2v2h-2zM188 990h2v2h-2z" fill="#2b96e0" />
                <path d="M195 997l6-7" stroke="#f5a83c" strokeWidth="3" /><circle cx="201" cy="990" r="2" fill="#e8405c" />
                <path d="M214 995h12l4-5v3l-4 5h-12z" fill="#aaa" />
                <path d="M214 981l3-3h13l-3 3z" fill={LIGHT} />
                <path d="M214 981h13v14h-13z" fill={MID} />
                <path d="M227 981l3-3v13l-3 4z" fill={DARK} />
                <path d="M194 1002v7h29v-7" stroke="#c6c6c6" strokeWidth="2" />
                <path d="M230 970h15v6h-15zM232 977h11l-5 4zM236 981h3v29h-3z" fill="#606060" />
            </svg>
            <Settings aria-label="Préférences"><Gear size={20} /></Settings>
        </Timeline>
        <Desktop />

        <Annotations width="1320" height="360" viewBox="0 0 1320 360">
            <defs>
                <linearGradient id="badge" x1="0" y1="0" x2="1" y2="1">
                    <stop offset="0" stopColor="#9fceff" />
                    <stop offset="1" stopColor="#f3f9ff" />
                </linearGradient>
                <linearGradient id="rim" x1="0" y1="0" x2="1" y2="1">
                    <stop offset="0" stopColor="#6bb8f0" />
                    <stop offset="1" stopColor="#4a7ba8" />
                </linearGradient>
            </defs>
            <g fill="none" stroke="#fb4848" strokeWidth="4" strokeLinecap="round">
                <path d="M350 308L224 158M251 167L223 157L228 184" />
                <path d="M1260 305L915 290M955 267L914 290L953 317" />
            </g>
            <Badge x={364} y={323} n="1" />
            <Badge x={1282} y={306} n="2" />
        </Annotations>
    </Window>
)

export default App
